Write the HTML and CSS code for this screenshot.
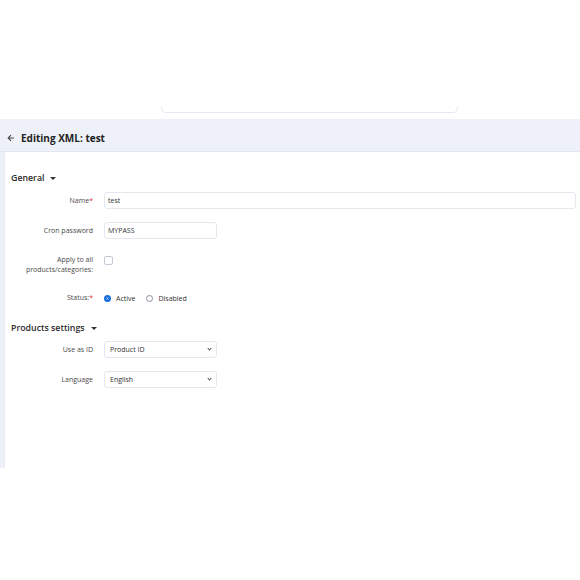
FILE: index.html
```html
<!DOCTYPE html>
<html lang="en">
<head>
    <meta charset="UTF-8">
    <meta name="viewport" content="width=device-width, initial-scale=1.0">
    <title>Editing XML: test</title>
    <link rel="stylesheet" href="styles.css">
</head>
<body>
    <div class="top-area">
        <div class="search-box"></div>
    </div>

    <div class="page">
        <div class="page-header">
            <span class="back-arrow">
                <svg width="8" height="8" viewBox="0 0 8 8"><path d="M7 4H1.5M4 1.2L1.2 4 4 6.8" fill="none" stroke="#444" stroke-width="1.1"/></svg>
            </span>
            <h1>Editing XML: test</h1>
        </div>

        <div class="card">
            <h2 class="section-title">General <span class="caret"></span></h2>

            <div class="row row-name">
                <label for="name">Name<span class="req">*</span></label>
                <input type="text" id="name" class="field wide" value="test">
            </div>

            <div class="row row-cron">
                <label for="cron">Cron password</label>
                <input type="text" id="cron" class="field" value="MYPASS">
            </div>

            <div class="row row-apply">
                <label>Apply to all products/categories:</label>
                <span class="check"></span>
            </div>

            <div class="row row-status">
                <label>Status:<span class="req">*</span></label>
                <div class="radios">
                    <span class="radio on"></span><span class="radio-text">Active</span>
                    <span class="radio"></span><span class="radio-text">Disabled</span>
                </div>
            </div>

            <h2 class="section-title products">Products settings <span class="caret"></span></h2>

            <div class="row row-id">
                <label>Use as ID</label>
                <div class="field select">Product ID <span class="chev"></span></div>
            </div>

            <div class="row row-lang">
                <label>Language</label>
                <div class="field select">English <span class="chev"></span></div>
            </div>
        </div>
    </div>
</body>
</html>
```

FILE: styles.css
```css
body {
    margin: 0;
    background-color: #fff;
    font-family: "Open Sans", Arial, sans-serif;
    color: #333;
}
.top-area {
    height: 119px;
    position: relative;
}
.search-box {
    position: absolute;
    left: 161px;
    top: 106px;
    width: 295px;
    height: 6px;
    border: 1px solid #e6e8f2;
    border-top: none;
    border-radius: 0 0 5px 5px;
}
.page {
    background-color: #eef2f8;
    height: 349px;
    display: flex;
    flex-direction: column;
}
.page-header {
    box-sizing: border-box;
    height: 33px;
    display: flex;
    align-items: center;
    padding: 6px 0 0 7px;
    border-bottom: 1px solid #e1e7f0;
}
.back-arrow {
    display: flex;
    margin-right: 6px;
}
h1 {
    margin: 0;
    font-size: 10px;
    font-weight: 700;
    color: #222;
}
.card {
    flex: 1;
    margin-left: 4px;
    background-color: #fff;
    border-left: 1px solid #e6ebf3;
    padding: 19px 4px 0 0;
}
.section-title {
    margin: 0 0 0 6px;
    font-size: 8.8px;
    font-weight: 600;
    color: #2b2b2b;
    display: flex;
    align-items: center;
    height: 14px;
}
.caret {
    margin-left: 6px;
    border-left: 3px solid transparent;
    border-right: 3px solid transparent;
    border-top: 3.5px solid #333;
}
.row {
    display: grid;
    grid-template-columns: 88px 1fr;
    column-gap: 11px;
    align-items: center;
    font-size: 7px;
}
.row label {
    text-align: right;
    color: #4a4a4a;
    line-height: 10px;
}
.req {
    color: #e0353b;
}
.field {
    box-sizing: border-box;
    height: 17px;
    width: 113px;
    border: 1px solid #e3e7ee;
    border-radius: 3px;
    padding: 0 3px;
    font-family: inherit;
    font-size: 7px;
    color: #333;
    outline: none;
}
.field.wide {
    width: 100%;
}
.row-name { margin-top: 7px; }
.row-cron { margin-top: 13px; }
.row-apply { margin-top: 16px; }
.row-status { margin-top: 18px; }
.products { margin-top: 18px; }
.row-id { margin-top: 6px; }
.row-lang { margin-top: 13px; }
.check {
    align-self: start;
    margin-top: 1px;
    width: 7px;
    height: 7px;
    border: 1px solid #c5cbd5;
    border-radius: 2px;
}
.radios {
    display: flex;
    align-items: center;
    height: 10px;
}
.radio {
    box-sizing: border-box;
    width: 7px;
    height: 7px;
    border: 1px solid #8a919c;
    border-radius: 50%;
    margin-right: 5px;
}
.radio.on {
    border: 2px solid #1a6fdc;
    background-color: #fff;
    box-shadow: inset 0 0 0 1px #1a6fdc;
}
.radio-text {
    margin-right: 11px;
    color: #333;
}
.select {
    display: flex;
    align-items: center;
    justify-content: space-between;
    padding: 0 5px 0 5px;
}
.chev {
    width: 2px;
    height: 2px;
    border-right: 1px solid #555;
    border-bottom: 1px solid #555;
    transform: rotate(45deg);
    margin-top: -2px;
}
```
